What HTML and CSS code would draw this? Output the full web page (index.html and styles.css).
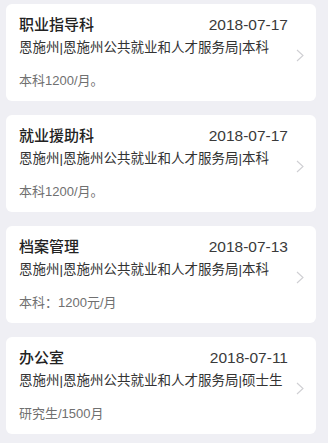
FILE: index.html
```html
<!DOCTYPE html>
<html lang="zh-CN">
<head>
  <meta charset="UTF-8">
  <meta name="viewport" content="width=device-width,initial-scale=1">
  <title>职位列表</title>
  <link rel="stylesheet" href="styles.css">
</head>
<body>
  <div class="list">
    <div class="job">
      <div class="info">
        <div class="head"><span class="title">职业指导科</span><span class="date">2018-07-17</span></div>
        <p class="org">恩施州|恩施州公共就业和人才服务局|本科</p>
        <p class="pay">本科1200/月。</p>
      </div>
      <svg class="arrow" width="8" height="13" viewBox="0 0 8 13"><path d="M1 1l6 5.5L1 12" fill="none" stroke="#cfcfd3" stroke-width="1.1"/></svg>
    </div>

    <div class="job">
      <div class="info">
        <div class="head"><span class="title">就业援助科</span><span class="date">2018-07-17</span></div>
        <p class="org">恩施州|恩施州公共就业和人才服务局|本科</p>
        <p class="pay">本科1200/月。</p>
      </div>
      <svg class="arrow" width="8" height="13" viewBox="0 0 8 13"><path d="M1 1l6 5.5L1 12" fill="none" stroke="#cfcfd3" stroke-width="1.1"/></svg>
    </div>

    <div class="job">
      <div class="info">
        <div class="head"><span class="title">档案管理</span><span class="date">2018-07-13</span></div>
        <p class="org">恩施州|恩施州公共就业和人才服务局|本科</p>
        <p class="pay">本科：1200元/月</p>
      </div>
      <svg class="arrow" width="8" height="13" viewBox="0 0 8 13"><path d="M1 1l6 5.5L1 12" fill="none" stroke="#cfcfd3" stroke-width="1.1"/></svg>
    </div>

    <div class="job">
      <div class="info">
        <div class="head"><span class="title">办公室</span><span class="date">2018-07-11</span></div>
        <p class="org">恩施州|恩施州公共就业和人才服务局|硕士生</p>
        <p class="pay">研究生/1500月</p>
      </div>
      <svg class="arrow" width="8" height="13" viewBox="0 0 8 13"><path d="M1 1l6 5.5L1 12" fill="none" stroke="#cfcfd3" stroke-width="1.1"/></svg>
    </div>
  </div>
</body>
</html>
```

FILE: styles.css
```css
body { margin: 0; background: #efeff4; font-family: "Liberation Sans", "Noto Sans CJK SC", sans-serif; }
.list { display: flex; flex-direction: column; gap: 14px; padding: 4px 12px 0 6px; }
.job { display: flex; align-items: center; height: 97px; box-sizing: border-box; padding: 11px 12px 0 13px; background: #fff; border-radius: 6px; }
.info { flex: 1; align-self: flex-start; }
.head { display: flex; justify-content: space-between; align-items: baseline; height: 20px; line-height: 20px; }
.title { font-size: 15px; font-weight: 500; color: #222; }
.date { font-size: 15.5px; color: #3a3a3a; }
.org { margin: 4px 0 0; font-size: 13.5px; line-height: 18px; color: #333; white-space: nowrap; }
.pay { margin: 15px 0 0; font-size: 13px; line-height: 18px; color: #707070; }
.arrow { margin-left: 8px; margin-top: -6px; flex-shrink: 0; }
```
